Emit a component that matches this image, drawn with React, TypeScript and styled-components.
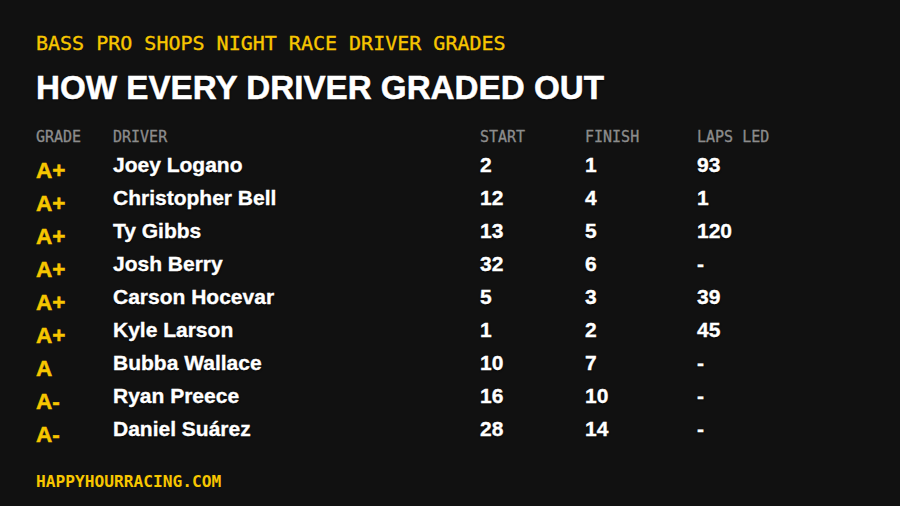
import React from "react";
import styled, { createGlobalStyle } from "styled-components";

// Types for the grade rows
interface DriverGrade {
  grade: string;
  driver: string;
  start: string;
  finish: string;
  lapsLed: string;
}

const rows: DriverGrade[] = [
  { grade: "A+", driver: "Joey Logano", start: "2", finish: "1", lapsLed: "93" },
  { grade: "A+", driver: "Christopher Bell", start: "12", finish: "4", lapsLed: "1" },
  { grade: "A+", driver: "Ty Gibbs", start: "13", finish: "5", lapsLed: "120" },
  { grade: "A+", driver: "Josh Berry", start: "32", finish: "6", lapsLed: "-" },
  { grade: "A+", driver: "Carson Hocevar", start: "5", finish: "3", lapsLed: "39" },
  { grade: "A+", driver: "Kyle Larson", start: "1", finish: "2", lapsLed: "45" },
  { grade: "A", driver: "Bubba Wallace", start: "10", finish: "7", lapsLed: "-" },
  { grade: "A-", driver: "Ryan Preece", start: "16", finish: "10", lapsLed: "-" },
  { grade: "A-", driver: "Daniel Suárez", start: "28", finish: "14", lapsLed: "-" },
];

const YELLOW = "#f7c600";
const MONO = `"DejaVu Sans Mono", "Liberation Mono", monospace`;
const SANS = `"Liberation Sans", Arial, sans-serif`;

const GlobalStyle = createGlobalStyle`
  html, body {
    margin: 0;
    padding: 0;
    background: #111111;
  }
`;

// Page layout
const Page = styled.div`
  width: 900px;
  height: 506px;
  box-sizing: border-box;
  padding: 31px 36px 0 36px;
  background: #111111;
  display: flex;
  flex-direction: column;
`;

const Kicker = styled.div`
  font-family: ${MONO};
  font-size: 20px;
  line-height: 24px;
  color: ${YELLOW};
  -webkit-text-stroke: 0.35px ${YELLOW};
`;

const Title = styled.h1`
  margin: 14px 0 0 0;
  font-family: ${SANS};
  font-weight: 700;
  font-size: 33.2px;
  line-height: 38px;
  color: #ffffff;
  -webkit-text-stroke: 0.5px #ffffff;
  text-shadow: 0 1px 2px rgba(0, 0, 0, 0.9);
`;

const Table = styled.div`
  margin-top: 20px;
  display: flex;
  flex-direction: column;
`;

const Row = styled.div<{ $header?: boolean }>`
  display: grid;
  grid-template-columns: 77px 367px 105px 112px 1fr;
  align-items: baseline;
  height: ${(p) => (p.$header ? "24px" : "33px")};
`;

const HeadCell = styled.div`
  font-family: ${MONO};
  font-size: 15px;
  line-height: 20px;
  color: #8c8c8c;
  -webkit-text-stroke: 0.3px #8c8c8c;
`;

const Grade = styled.div`
  font-family: ${SANS};
  font-weight: 700;
  font-size: 22.5px;
  line-height: 28px;
  color: ${YELLOW};
  -webkit-text-stroke: 0.5px ${YELLOW};
  position: relative;
  top: 6px;
`;

const Cell = styled.div`
  font-family: ${SANS};
  font-weight: 700;
  font-size: 21px;
  line-height: 28px;
  color: #ffffff;
  -webkit-text-stroke: 0.35px #ffffff;
  text-shadow: 0 1px 2px rgba(0, 0, 0, 0.9);
`;

const Footer = styled.div`
  margin-top: auto;
  margin-bottom: 14px;
  font-family: ${MONO};
  font-size: 16.2px;
  line-height: 20px;
  color: ${YELLOW};
  font-weight: 700;
`;

const App: React.FC = () => {
  return (
    <>
      <GlobalStyle />
      <Page>
        <Kicker>BASS PRO SHOPS NIGHT RACE DRIVER GRADES</Kicker>
        <Title>HOW EVERY DRIVER GRADED OUT</Title>
        <Table>
          <Row $header>
            <HeadCell>GRADE</HeadCell>
            <HeadCell>DRIVER</HeadCell>
            <HeadCell>START</HeadCell>
            <HeadCell>FINISH</HeadCell>
            <HeadCell>LAPS LED</HeadCell>
          </Row>
          {rows.map((r, i) => (
            <Row key={i}>
              <Grade>{r.grade}</Grade>
              <Cell>{r.driver}</Cell>
              <Cell>{r.start}</Cell>
              <Cell>{r.finish}</Cell>
              <Cell>{r.lapsLed}</Cell>
            </Row>
          ))}
        </Table>
        <Footer>HAPPYHOURRACING.COM</Footer>
      </Page>
    </>
  );
};

export default App;
